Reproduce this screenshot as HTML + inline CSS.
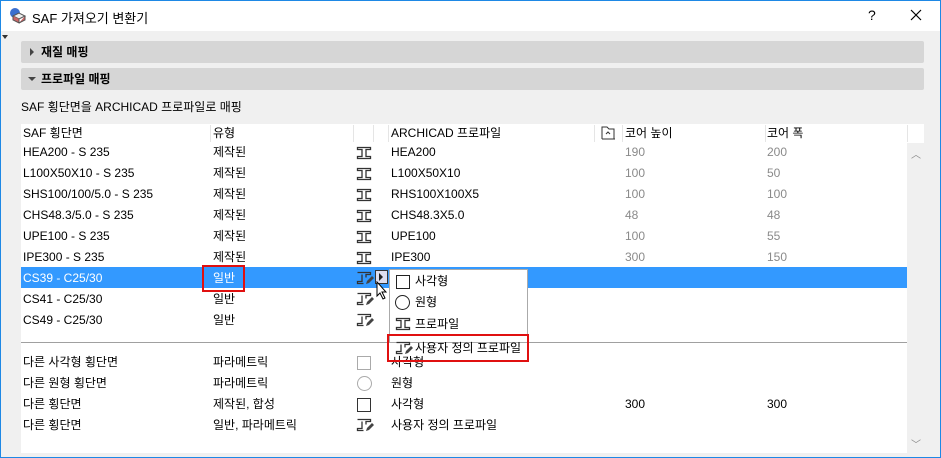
<!DOCTYPE html><html><head><meta charset="utf-8"><style>
*{margin:0;padding:0;box-sizing:border-box}
body{width:941px;height:458px;overflow:hidden;background:#f0f0f0;font-family:"Liberation Sans","Noto Sans CJK KR",sans-serif;font-size:12px;color:#000;position:relative}
.a{position:absolute;white-space:nowrap}
.g{color:#8a8a8a}
</style></head><body>
<div class="a" style="left:0;top:0;width:941px;height:458px;border:1px solid #1e88e5"></div>
<div class="a" style="left:1px;top:1px;width:939px;height:30px;background:#fff"></div>
<svg class="a" style="left:8px;top:6px" width="20" height="20" viewBox="0 0 20 20"><circle cx="7" cy="7" r="5" fill="#3b6fcf"/><path d="M5 10l6-3 6 3-6 3z" fill="#eee" stroke="#555"/><path d="M5 10v4l6 3v-4M17 10v4l-6 3" fill="#c66" stroke="#555"/></svg>
<div class="a" style="left:32px;top:8px;font-size:13px">SAF 가져오기 변환기</div>
<div class="a" style="left:868px;top:7px;font-size:14px">?</div>
<svg class="a" style="left:910px;top:9px" width="12" height="12"><path d="M1 1L11 11M11 1L1 11" stroke="#000" stroke-width="1.2"/></svg>
<div class="a" style="left:2px;top:35px;border-left:3px solid transparent;border-right:3px solid transparent;border-top:4px solid #333"></div>
<div class="a" style="left:21px;top:41px;width:903px;height:22px;background:#d6d6d6;border-radius:2px"></div>
<div class="a" style="left:30px;top:48px;border-top:4px solid transparent;border-bottom:4px solid transparent;border-left:4px solid #444"></div>
<div class="a" style="left:41px;top:43px;font-weight:bold">재질 매핑</div>
<div class="a" style="left:21px;top:68px;width:903px;height:22px;background:#d6d6d6;border-radius:2px"></div>
<div class="a" style="left:28px;top:77px;border-left:4px solid transparent;border-right:4px solid transparent;border-top:4px solid #444"></div>
<div class="a" style="left:41px;top:70px;font-weight:bold">프로파일 매핑</div>
<div class="a" style="left:21px;top:98px">SAF 횡단면을 ARCHICAD 프로파일로 매핑</div>
<div class="a" style="left:21px;top:124px;width:903px;height:329px;background:#fff"></div>
<div class="a" style="left:907px;top:143px;width:17px;height:310px;background:#f0f0f0"></div>
<div class="a g" style="left:911px;top:146px;font-size:10px">︿</div>
<div class="a g" style="left:911px;top:436px;font-size:10px">﹀</div>
<div class="a" style="left:210px;top:125px;width:1px;height:17px;background:#e5e5e5"></div>
<div class="a" style="left:353px;top:125px;width:1px;height:17px;background:#e5e5e5"></div>
<div class="a" style="left:373px;top:125px;width:1px;height:17px;background:#e5e5e5"></div>
<div class="a" style="left:388px;top:125px;width:1px;height:17px;background:#e5e5e5"></div>
<div class="a" style="left:594px;top:125px;width:1px;height:17px;background:#e5e5e5"></div>
<div class="a" style="left:622px;top:125px;width:1px;height:17px;background:#e5e5e5"></div>
<div class="a" style="left:765px;top:125px;width:1px;height:17px;background:#e5e5e5"></div>
<div class="a" style="left:907px;top:125px;width:1px;height:17px;background:#e5e5e5"></div>
<div class="a" style="left:23px;top:125px;line-height:17px">SAF 횡단면</div>
<div class="a" style="left:213px;top:125px;line-height:17px">유형</div>
<div class="a" style="left:391px;top:125px;line-height:17px">ARCHICAD 프로파일</div>
<svg class="a" style="left:601px;top:126px" width="15" height="14"><path d="M1 13V1h5l2 2h5v10" fill="none" stroke="#333"/><path d="M1 13h13" stroke="#333"/><path d="M5 8l2-2 2 2" fill="none" stroke="#333"/></svg>
<div class="a" style="left:625px;top:125px;line-height:17px">코어 높이</div>
<div class="a" style="left:767px;top:125px;line-height:17px">코어 폭</div>
<div class="a" style="left:21px;top:267px;width:886px;height:21px;background:#3399ff"></div>
<svg width="0" height="0" style="position:absolute"><defs>
<symbol id="ib" viewBox="0 0 16 14"><path d="M1.5 1.5h13v2h-4.5v7h4.5v2h-13v-2h4.5v-7h-4.5z" fill="none" stroke="#333" stroke-width="1.3"/></symbol>
<symbol id="ip" viewBox="0 0 18 14"><path d="M1.5 1.5h13v2h-4.5v3M6 3.5v7h-4.5v2h6" fill="none" stroke="#333" stroke-width="1.3"/><path d="M10 13l1-3 5-5 2 2-5 5z" fill="#444"/></symbol>
</defs></svg>
<div class="a" style="left:23px;top:142px;line-height:21px">HEA200 - S 235<br>L100X50X10 - S 235<br>SHS100/100/5.0 - S 235<br>CHS48.3/5.0 - S 235<br>UPE100 - S 235<br>IPE300 - S 235<br><span style="color:#fff">CS39 - C25/30</span><br>CS41 - C25/30<br>CS49 - C25/30</div>
<div class="a" style="left:213px;top:142px;line-height:21px">제작된<br>제작된<br>제작된<br>제작된<br>제작된<br>제작된<br><span style="color:#fff">일반</span><br>일반<br>일반</div>
<div class="a" style="left:391px;top:142px;line-height:21px">HEA200<br>L100X50X10<br>RHS100X100X5<br>CHS48.3X5.0<br>UPE100<br>IPE300</div>
<div class="a g" style="left:625px;top:142px;line-height:21px">190<br>100<br>100<br>48<br>100<br>300</div>
<div class="a g" style="left:767px;top:142px;line-height:21px">200<br>50<br>100<br>48<br>55<br>150</div>
<svg class="a" style="left:356px;top:146px" width="16" height="14"><use href="#ib"/></svg>
<svg class="a" style="left:356px;top:167px" width="16" height="14"><use href="#ib"/></svg>
<svg class="a" style="left:356px;top:188px" width="16" height="14"><use href="#ib"/></svg>
<svg class="a" style="left:356px;top:209px" width="16" height="14"><use href="#ib"/></svg>
<svg class="a" style="left:356px;top:230px" width="16" height="14"><use href="#ib"/></svg>
<svg class="a" style="left:356px;top:251px" width="16" height="14"><use href="#ib"/></svg>
<svg class="a" style="left:356px;top:271px" width="18" height="14"><use href="#ip"/></svg>
<svg class="a" style="left:356px;top:292px" width="18" height="14"><use href="#ip"/></svg>
<svg class="a" style="left:356px;top:313px" width="18" height="14"><use href="#ip"/></svg>
<div class="a" style="left:375px;top:270px;width:13px;height:14px;background:#dde;border:1px solid #333"></div>
<div class="a" style="left:379px;top:273px;border-top:4px solid transparent;border-bottom:4px solid transparent;border-left:4px solid #222"></div>
<svg class="a" style="left:376px;top:281px" width="14" height="20"><path d="M1 1v14l3-3 3 6 2-1-3-6h4z" fill="#fff" stroke="#000"/></svg>
<div class="a" style="left:202px;top:265px;width:43px;height:27px;border:2px solid #e01010"></div>
<div class="a" style="left:21px;top:342px;width:886px;height:1px;background:#a0a0a0"></div>
<div class="a" style="left:23px;top:352px;line-height:21px">다른 사각형 횡단면<br>다른 원형 횡단면<br>다른 횡단면<br>다른 횡단면</div>
<div class="a" style="left:213px;top:352px;line-height:21px">파라메트릭<br>파라메트릭<br>제작된, 합성<br>일반, 파라메트릭</div>
<div class="a" style="left:391px;top:352px;line-height:21px">사각형<br>원형<br>사각형<br>사용자 정의 프로파일</div>
<div class="a" style="left:625px;top:394px;line-height:21px">300</div>
<div class="a" style="left:767px;top:394px;line-height:21px">300</div>
<div class="a" style="left:357px;top:356px;width:14px;height:14px;border:1px solid #aaa"></div>
<div class="a" style="left:357px;top:376px;width:15px;height:15px;border:1px solid #aaa;border-radius:50%"></div>
<div class="a" style="left:357px;top:398px;width:14px;height:14px;border:1px solid #333"></div>
<svg class="a" style="left:356px;top:418px" width="18" height="14"><use href="#ip"/></svg>
<div class="a" style="left:389px;top:269px;width:139px;height:74px;background:#fff;border:1px solid #aaa"></div>
<div class="a" style="left:396px;top:275px;width:14px;height:14px;border:1px solid #222"></div>
<div class="a" style="left:415px;top:272px">사각형</div>
<div class="a" style="left:395px;top:295px;width:15px;height:15px;border:1px solid #222;border-radius:50%"></div>
<div class="a" style="left:415px;top:293px">원형</div>
<svg class="a" style="left:395px;top:317px" width="16" height="14"><use href="#ib"/></svg>
<div class="a" style="left:415px;top:315px">프로파일</div>
<svg class="a" style="left:395px;top:341px" width="18" height="14"><use href="#ip"/></svg>
<div class="a" style="left:415px;top:339px">사용자 정의 프로파일</div>
<div class="a" style="left:387px;top:334px;width:142px;height:28px;border:2px solid #e01010"></div>
</body></html>
